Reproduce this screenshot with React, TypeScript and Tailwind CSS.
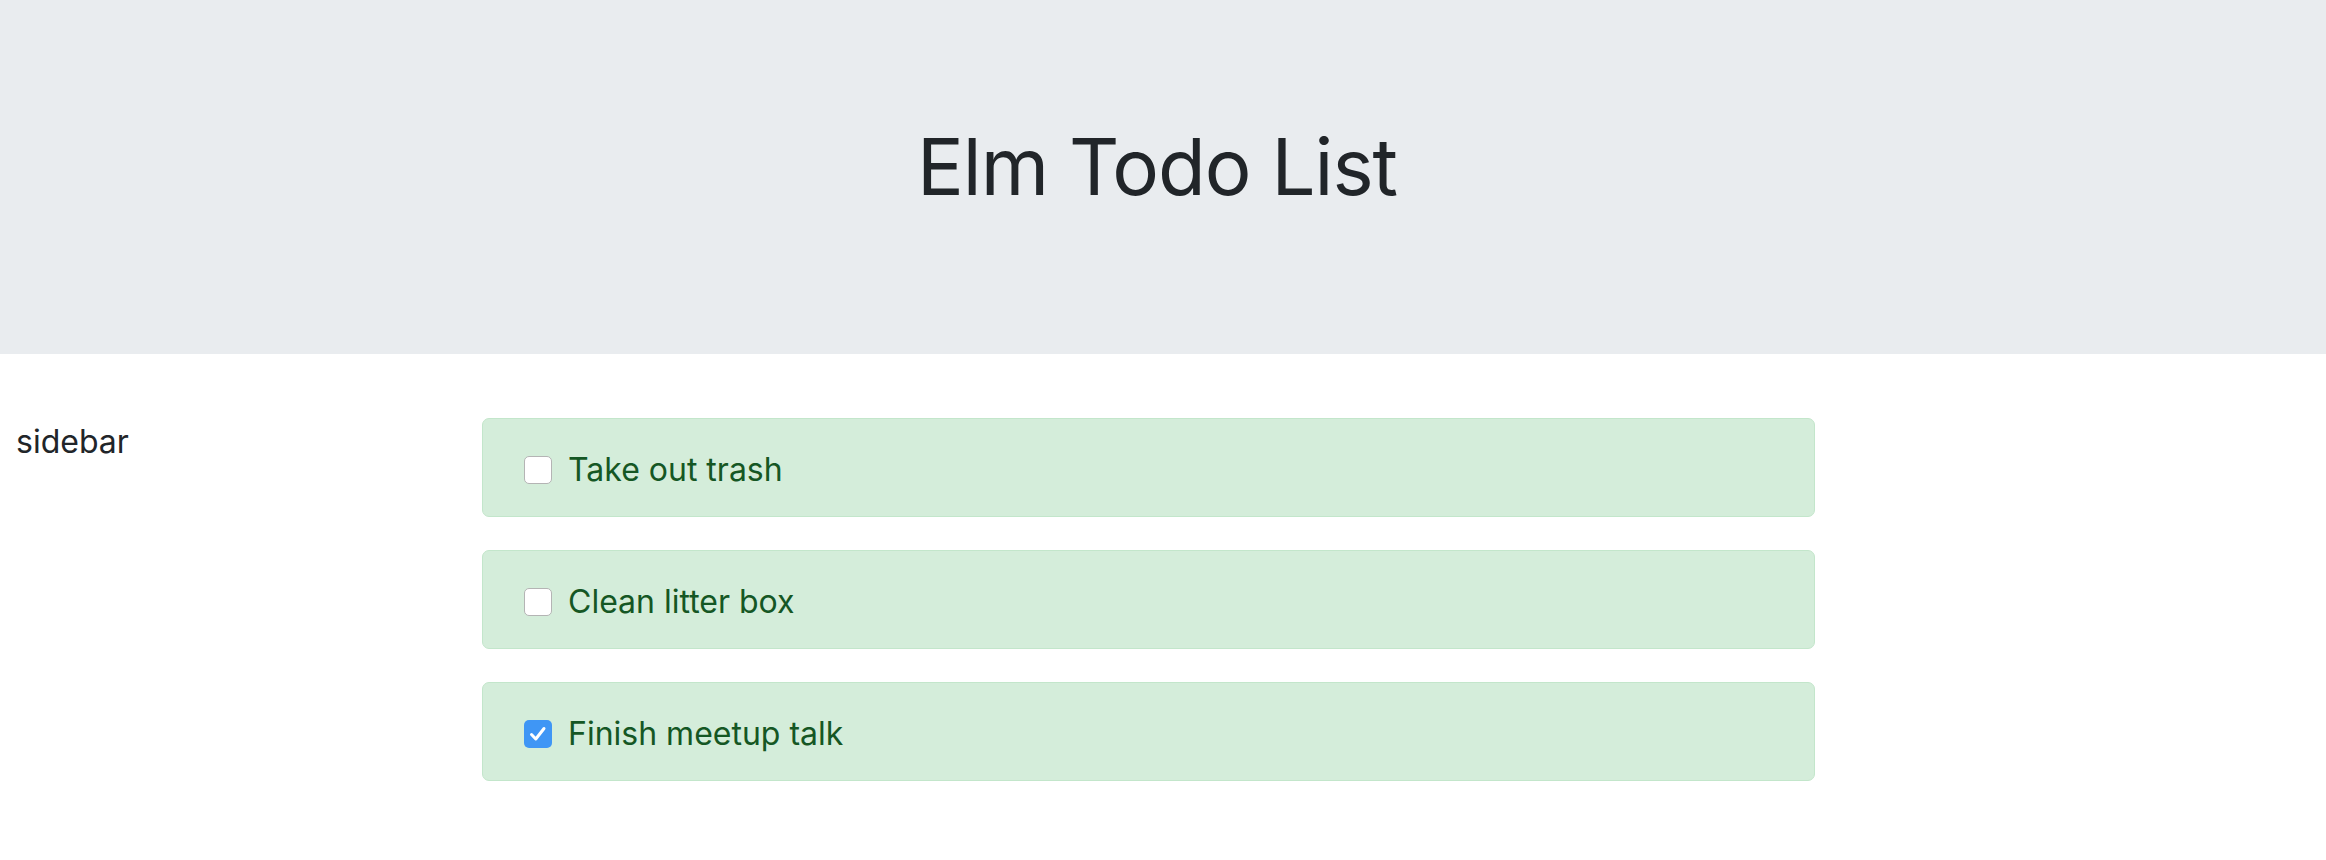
const todos = [
  { id: 1, title: 'Take out trash', done: false },
  { id: 2, title: 'Clean litter box', done: false },
  { id: 3, title: 'Finish meetup talk', done: true },
];

const Check = ({ checked }: { checked: boolean }) => {
  if (checked) {
    return (
      <span className="w-[28px] h-[28px] rounded-[5px] bg-[#3f96f5] flex items-center justify-center shrink-0">
        <svg width="28" height="28" viewBox="0 0 28 28" fill="none">
          <path
            d="M7.5 14.5 L11.8 19 L20 8.5"
            stroke="white"
            strokeWidth="3"
            strokeLinecap="round"
            strokeLinejoin="round"
          />
        </svg>
      </span>
    );
  }
  return (
    <span className="w-[28px] h-[28px] rounded-[5px] bg-white border border-[#b4b4b4] shrink-0" />
  );
};

const TodoItem = ({ todo }: { todo: { id: number; title: string; done: boolean } }) => {
  return (
    <div className="h-[99px] bg-[#d4edda] border border-[#c3e6cb] rounded-[7px] flex items-center pl-[41px] pt-[4px] gap-[16px]">
      <Check checked={todo.done} />
      <span className="text-[32px] text-[#155724] leading-none">{todo.title}</span>
    </div>
  );
};

export default function App() {
  return (
    <div
      className="min-h-screen bg-white text-[#212529]"
      style={{ fontFamily: 'Inter, "Noto Sans", sans-serif' }}
    >
      <div className="h-[354px] bg-[#e9ecef] flex items-center justify-center pb-[20px] pr-[12px]">
        <h1 className="text-[78px] font-normal leading-[1.2] tracking-[-1px]">Elm Todo List</h1>
      </div>
      <div className="flex flex-row mt-[64px]">
        <div className="w-[482px] pl-[16px] shrink-0">
          <p className="text-[32px] leading-[48px]">sidebar</p>
        </div>
        <div className="w-[1333px] flex flex-col gap-[33px]">
          {todos.map((t) => (
            <TodoItem key={t.id} todo={t} />
          ))}
        </div>
      </div>
    </div>
  );
}
